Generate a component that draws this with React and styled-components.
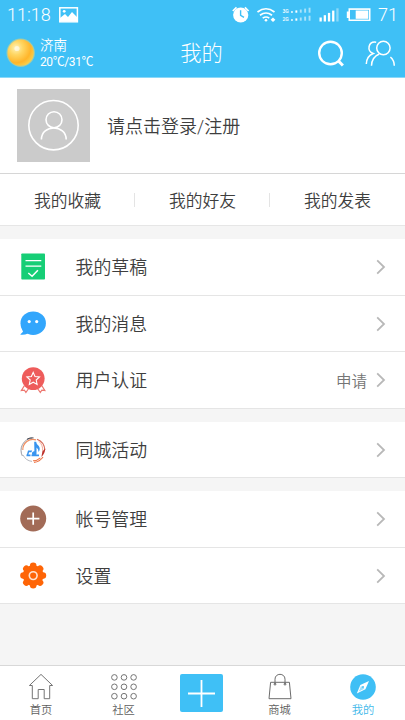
import React from 'react';
import styled, { createGlobalStyle } from 'styled-components';

const Global = createGlobalStyle`
  * { box-sizing: border-box; }
  body { margin: 0; background: #f5f5f5; }
  svg { display: block; flex: none; }
`;

const Screen = styled.div`
  width: 405px;
  height: 720px;
  display: flex;
  flex-direction: column;
  overflow: hidden;
  background: #f5f5f5;
  color: #3e3e3e;
  font-family: Roboto, 'Noto Sans CJK SC', sans-serif;
  font-weight: 350;
  white-space: nowrap;
`;

const Header = styled.header`
  height: 78px;
  flex: none;
  background: #3fc0f6;
  border-bottom: 1px solid #8ad8f9;
  color: #fff;
`;

const StatusBar = styled.div`
  height: 29px;
  padding: 0 7px 0 7px;
  display: flex;
  align-items: center;
  font-size: 18px;
  font-weight: 300;
  line-height: 29px;
`;

const StatusIcons = styled.div`
  margin-left: auto;
  margin-right: 7px;
`;

const TitleBar = styled.div`
  height: 48px;
  display: grid;
  grid-template-columns: 1fr auto 1fr;
  align-items: center;
  padding: 0 9px 0 6px;
`;

const Weather = styled.div`
  display: flex;
  align-items: center;
  gap: 4px;
`;

const Place = styled.div`
  padding-top: 1px;
  font-size: 13.5px;
  line-height: 17px;
`;

const Temperature = styled.div`
  font-size: 12px;
  font-weight: 400;
  line-height: 17px;
  letter-spacing: -0.4px;
`;

const Title = styled.h1`
  margin: 0;
  padding: 2px 0 0 1px;
  font-size: 21.3px;
  font-weight: 300;
  line-height: 46px;
`;

const Actions = styled.div`
  display: flex;
  justify-content: flex-end;
  align-items: center;
  gap: 20px;
  padding-top: 2px;
`;

const Profile = styled.section`
  height: 96px;
  flex: none;
  display: flex;
  align-items: center;
  gap: 17px;
  padding-left: 17px;
  background: #fff;
  border-bottom: 1px solid #d6d6d6;
`;

const LoginPrompt = styled.div`
  padding-bottom: 2px;
  font-size: 18px;
`;

const Avatar = styled.div`
  width: 73px;
  height: 73px;
  display: grid;
  place-items: center;
  background: #cbcbcb;
`;

const Shortcuts = styled.nav`
  height: 52px;
  flex: none;
  display: grid;
  grid-template-columns: repeat(3, 1fr);
  align-items: center;
  background: #fff;
  border-bottom: 1px solid #e6e6e6;
`;

const Shortcut = styled.div`
  height: 14px;
  display: flex;
  align-items: center;
  justify-content: center;
  font-size: 16.8px;
  padding-left: 1px;
  border-right: 1px solid #e4e4e4;
  &:last-child { border-right-color: transparent; }
`;

const Group = styled.section`
  margin-top: 13px;
  background: #fff;
`;

const Row = styled.div`
  height: ${(p) => p.$height}px;
  display: flex;
  align-items: center;
  padding: 0 19px 0 19px;
  border-bottom: 1px solid #e5e5e5;
`;

const RowIcon = styled.div`
  width: 28px;
  margin-right: 28.5px;
`;

const RowLabel = styled.div`
  flex: 1;
  padding-bottom: 2px;
  font-size: 17.9px;
`;

const RowNote = styled.div`
  margin-right: 9px;
  padding-bottom: 1px;
  font-size: 15.5px;
  color: #757575;
`;

const TabBar = styled.nav`
  height: 55px;
  flex: none;
  margin-top: auto;
  display: grid;
  grid-template-columns: 82px 83px 73px 83px 84px;
  background: #fff;
  border-top: 1px solid #d8d8d8;
`;

const Tab = styled.div`
  display: flex;
  flex-direction: column;
  align-items: center;
  padding-top: 7px;
  font-size: 11.3px;
  line-height: 16px;
  color: ${(p) => (p.$active ? '#3fb9ea' : '#606060')};
`;

const TabGlyph = styled.div`
  height: 28px;
  margin-bottom: 2px;
`;

const AddButton = styled.div`
  width: 43px;
  height: 38px;
  margin-top: 1px;
  display: grid;
  place-items: center;
  border-radius: 2px;
  background: #3fc0f6;
`;

const PictureIcon = () => (
  <svg width="20" height="16" viewBox="0 0 20 16">
    <rect x="0.8" y="0.8" width="17.6" height="14" fill="none" stroke="#fff" strokeWidth="1.5" />
    <path d="M1 14V11L6 7l3 3 4-5 5 5v4z" fill="#fff" />
    <circle cx="5.2" cy="4.3" r="1.4" fill="#fff" />
  </svg>
);

const Picture = styled.div`
  margin-left: 8px;
`;

const bars = [0, 1, 2, 3, 4];

const SystemIcons = () => (
  <svg width="140" height="20" viewBox="231 4.5 140 20" fill="#fff">
    <circle cx="240.7" cy="14.5" r="7.6" />
    <path d="M232.8 10.5l3.7-3.6M248.6 10.5l-3.7-3.6" stroke="#fff" strokeWidth="1.7" />
    <path d="M240.6 9.8v5l3.4 2" fill="none" stroke="#3fc0f6" strokeWidth="1.4" />
    <g fill="none" stroke="#fff" strokeWidth="1.7">
      <path d="M257.5 11.5q8.5-6.5 17 0" />
      <path d="M260 14.7q6-4.4 12 0" />
      <path d="M262.7 17.6q3.3-2.2 6.6 0" />
    </g>
    <circle cx="266" cy="19.8" r="1.3" />
    <path d="M273 17l2.4 2.3-2.4 2.3-2.4-2.3z" />
    <g fontFamily="Roboto" fontSize="5" fontWeight="500">
      <text x="282.5" y="12.2">3G</text>
      <text x="282.5" y="20">2G</text>
    </g>
    {bars.map((i) => (
      <g key={i}>
        <rect x={291 + i * 4.4} y={10.8 - i * 0.9} width="1.9" height={1.4 + i * 0.9} opacity={i > 1 ? 0.55 : 1} />
        <rect x={291 + i * 4.4} y={18.8 - i * 0.9} width="1.9" height={1.4 + i * 0.9} opacity={i > 1 ? 0.55 : 1} />
        <rect x={319.5 + i * 4.2} y={17 - i * 2.3} width="2.3" height={4 + i * 2.3} opacity={i > 3 ? 0.4 : 1} />
      </g>
    ))}
    <path d="M346.8 11h1.7V7.8h22V20.6h-22V17.4h-1.7z" />
    <path d="M350 9.4h19v9.6h-19z" fill="#3fc0f6" />
    <rect x="355.7" y="10" width="12.6" height="8.3" />
  </svg>
);

const Sun = () => (
  <svg width="30" height="32" viewBox="0.5 0 30 32">
    <defs>
      <radialGradient id="sun" cx="0.32" cy="0.32" r="0.75">
        <stop offset="0" stopColor="#fff3ba" />
        <stop offset="0.35" stopColor="#ffd662" />
        <stop offset="0.75" stopColor="#ffb52a" />
        <stop offset="1" stopColor="#f9d04e" />
      </radialGradient>
    </defs>
    <circle cx="15.2" cy="15.7" r="14.2" fill="#f5d56a" opacity="0.5" />
    <circle cx="15.2" cy="15.7" r="13.1" fill="url(#sun)" />
    <circle cx="11.5" cy="11.5" r="2.6" fill="#fff" opacity="0.55" />
  </svg>
);

const SearchIcon = () => (
  <svg width="28" height="28" viewBox="0 0 28 28" fill="none" stroke="#fff" strokeWidth="2.4">
    <circle cx="13.5" cy="13" r="11.3" />
    <path d="M21.2 20.8l4.7 4.7" strokeWidth="3" />
  </svg>
);

const FriendsIcon = () => (
  <svg width="31" height="28" viewBox="0 0 31 28" fill="none" stroke="#fff" strokeWidth="1.5">
    <circle cx="18.4" cy="8" r="6.7" />
    <path d="M11.2 2.2C3.2 1 1.3 11.2 8.2 13.5C3.5 15.4 1.5 19 1.3 24" />
    <path d="M14.3 14C9.5 16 6.6 20 6.5 25.8" />
    <path d="M25.4 17q3.8 3.2 3.9 8.8" />
  </svg>
);

const PersonIcon = () => (
  <svg width="53" height="53" viewBox="0 0 53 53" fill="none" stroke="#fff" strokeWidth="1.6">
    <circle cx="26.5" cy="26.2" r="24.7" />
    <circle cx="27" cy="20.7" r="8" />
    <path d="M14.4 40.5c0-15.4 24.8-15.4 24.8 0" />
  </svg>
);

const Chevron = () => (
  <svg width="10" height="16" viewBox="0 0 10 16" fill="none" stroke="#b8b8b8" strokeWidth="1.8">
    <path d="M1.2 1.3L8 8l-6.8 6.7" />
  </svg>
);

const DraftIcon = () => (
  <svg width="28" height="28" viewBox="0 0 28 28" fill="none" stroke="#fff" strokeWidth="1.3">
    <rect x="2.3" y="0.5" width="23.7" height="26" rx="0.8" fill="#16ce76" stroke="none" />
    <path d="M6.5 7.7h15.8M6.5 13.2h15.8" />
    <path d="M9.3 20l3.8 3.2 5.8-6" strokeWidth="1.5" />
  </svg>
);

const MessageIcon = () => (
  <svg width="28" height="28" viewBox="0 0 28 28">
    <ellipse cx="14.2" cy="13.2" rx="12.7" ry="11.8" fill="#32a6fc" />
    <path d="M2 16.5l2 5.3-2.8 2.8q4 .7 7.8-1.2z" fill="#32a6fc" />
    <circle cx="10.2" cy="11.6" r="1.6" fill="#fff" />
    <circle cx="17.7" cy="11.6" r="1.6" fill="#fff" />
  </svg>
);

const MedalIcon = () => (
  <svg width="28" height="28" viewBox="0 0 28 28" fill="none" stroke="#ed7770" strokeWidth="1.1">
    <path d="M5.4 19.6l-3.1 5 3.1-.4 1.5 2.4 3.3-5M22.8 19.6l3.1 5-3.1-.4-1.5 2.4-3.3-5" />
    <circle cx="14.2" cy="12.6" r="11.4" fill="#ee5c5b" stroke="none" />
    <path d="M14.2 6.4l1.8 4.1 4.5.5-3.3 3 .9 4.4-3.9-2.2-3.9 2.2.9-4.4-3.3-3 4.5-.5z" stroke="#fff" />
  </svg>
);

const MusicIcon = () => (
  <svg width="28" height="28" viewBox="0 0 28 28" fill="none">
    <path d="M3.4 20A12.3 12.3 0 0 1 13 2.1" stroke="#8d8e99" strokeWidth="0.9" />
    <path d="M8 3.2q3-1.8 6.5-1.3" stroke="#40434e" strokeWidth="1" />
    <path d="M3.8 14A10.3 10.3 0 0 1 17 3.8" stroke="#ef9064" strokeWidth="1.2" />
    <path d="M4 19q2.8 5.7 9 6.4" stroke="#b7b9bf" strokeWidth="1" />
    <path d="M18 3.2A12 12 0 0 1 25.8 14" stroke="#d66a58" strokeWidth="1.2" />
    <path d="M20 5.4Q24 9 23.7 15" stroke="#f2a18c" strokeWidth="0.9" />
    <path d="M26.2 12.5q0 4.6-3.8 8.5l1-5.5z" fill="#bd3029" />
    <path d="M15 26.4q5.7-.6 9-5.4M14 24.8q4 0 7.4-3" stroke="#ed7547" strokeWidth="1.1" />
    <path d="M15.2 5.8h1.9q.4 2.9 2.7 4.3 2 2.8-.2 6-.1-3.2-2.1-4.6v7q-1.5 2-4 .8-1.6-2.8 1.3-4l.6-.1z" fill="#3994ef" />
    <path d="M9 14.4h4.2l-.8 1.8h-2.3l-.9 3H7.7z" fill="#3994ef" />
    <path d="M7.5 19.4h4M12.5 19.4h7.5" stroke="#3994ef" strokeWidth="1.7" />
  </svg>
);

const AccountIcon = () => (
  <svg width="28" height="28" viewBox="0 0 28 28">
    <circle cx="14.2" cy="13.6" r="13" fill="#a26b57" />
    <path d="M8 13.6h12.4M14.2 7.4v12.4" stroke="#fff" strokeWidth="1.7" />
  </svg>
);

const petals = [0, 45, 90, 135, 180, 225, 270, 315];

const SettingsIcon = () => (
  <svg width="28" height="28" viewBox="0 0 28 28" fill="#fe6507">
    <circle cx="14.2" cy="13.6" r="10.4" />
    {petals.map((a) => (
      <circle key={a} cx="14.2" cy="3.9" r="3.3" transform={`rotate(${a} 14.2 13.6)`} />
    ))}
    <circle cx="14.2" cy="13.6" r="3.9" fill="none" stroke="#ffe3d0" strokeWidth="1.6" />
  </svg>
);

const HomeIcon = () => (
  <svg width="26" height="28" viewBox="0 0 26 28" fill="none" stroke="#747474" strokeWidth="1">
    <path d="M4.3 12.5H1.4L13 1.4l11.6 11.1h-2.9v13.2h-5.5v-9.2h-6v9.2H4.3z" />
  </svg>
);

const CommunityIcon = () => (
  <svg width="26" height="28" viewBox="0 0 26 28" fill="none" stroke="#747474" strokeWidth="1">
    {[4.4, 13.8, 23.2].map((y) => [3.4, 13, 22.6].map((x) => <circle key={`${x}-${y}`} cx={x} cy={y} r="2.8" />))}
  </svg>
);

const BagIcon = () => (
  <svg width="26" height="28" viewBox="0 0 26 28" fill="none" stroke="#6c6c6c" strokeWidth="1">
    <path d="M3.6 9.3h18.8l1.6 16.4H2z" />
    <path d="M8 11.5V6.2c0-6.5 10-6.5 10 0v5.3" />
    <circle cx="8" cy="11.2" r="0.9" />
    <circle cx="18" cy="11.2" r="0.9" />
  </svg>
);

const CompassIcon = () => (
  <svg width="26" height="28" viewBox="0 0 26 28">
    <circle cx="13" cy="14" r="12.8" fill="#3fbff5" />
    <path d="M19 8l-3.6 8.2-8.6 4.2 3.5-8.5z" fill="#fff" />
    <path d="M11 12.9l3.3 2.9-5.4 2.7z" fill="#3fbff5" opacity=".5" />
    <circle cx="13" cy="14" r="1" fill="#3fbff5" />
  </svg>
);

const PlusIcon = () => (
  <svg width="29" height="29" viewBox="0 0 29 29" stroke="#fff" strokeWidth="1.8">
    <path d="M1 14.5h27M14.5 1v27" />
  </svg>
);

const groups = [
  [
    { label: '我的草稿', Icon: DraftIcon, height: 57 },
    { label: '我的消息', Icon: MessageIcon, height: 56 },
    { label: '用户认证', Icon: MedalIcon, height: 57, note: '申请' },
  ],
  [{ label: '同城活动', Icon: MusicIcon, height: 56 }],
  [
    { label: '帐号管理', Icon: AccountIcon, height: 57 },
    { label: '设置', Icon: SettingsIcon, height: 56 },
  ],
];

export default function App() {
  return (
    <Screen>
      <Global />
      <Header>
        <StatusBar>
          11:18
          <Picture><PictureIcon /></Picture>
          <StatusIcons><SystemIcons /></StatusIcons>
          71
        </StatusBar>
        <TitleBar>
          <Weather>
            <Sun />
            <div>
              <Place>济南</Place>
              <Temperature>20℃/31℃</Temperature>
            </div>
          </Weather>
          <Title>我的</Title>
          <Actions>
            <SearchIcon />
            <FriendsIcon />
          </Actions>
        </TitleBar>
      </Header>
      <Profile>
        <Avatar><PersonIcon /></Avatar>
        <LoginPrompt>请点击登录/注册</LoginPrompt>
      </Profile>
      <Shortcuts>
        <Shortcut>我的收藏</Shortcut>
        <Shortcut>我的好友</Shortcut>
        <Shortcut>我的发表</Shortcut>
      </Shortcuts>
      {groups.map((rows) => (
        <Group key={rows[0].label}>
          {rows.map(({ label, Icon, height, note }) => (
            <Row key={label} $height={height}>
              <RowIcon><Icon /></RowIcon>
              <RowLabel>{label}</RowLabel>
              {note && <RowNote>{note}</RowNote>}
              <Chevron />
            </Row>
          ))}
        </Group>
      ))}
      <TabBar>
        <Tab><TabGlyph><HomeIcon /></TabGlyph>首页</Tab>
        <Tab><TabGlyph><CommunityIcon /></TabGlyph>社区</Tab>
        <Tab><AddButton><PlusIcon /></AddButton></Tab>
        <Tab><TabGlyph><BagIcon /></TabGlyph>商城</Tab>
        <Tab $active><TabGlyph><CompassIcon /></TabGlyph>我的</Tab>
      </TabBar>
    </Screen>
  );
}
